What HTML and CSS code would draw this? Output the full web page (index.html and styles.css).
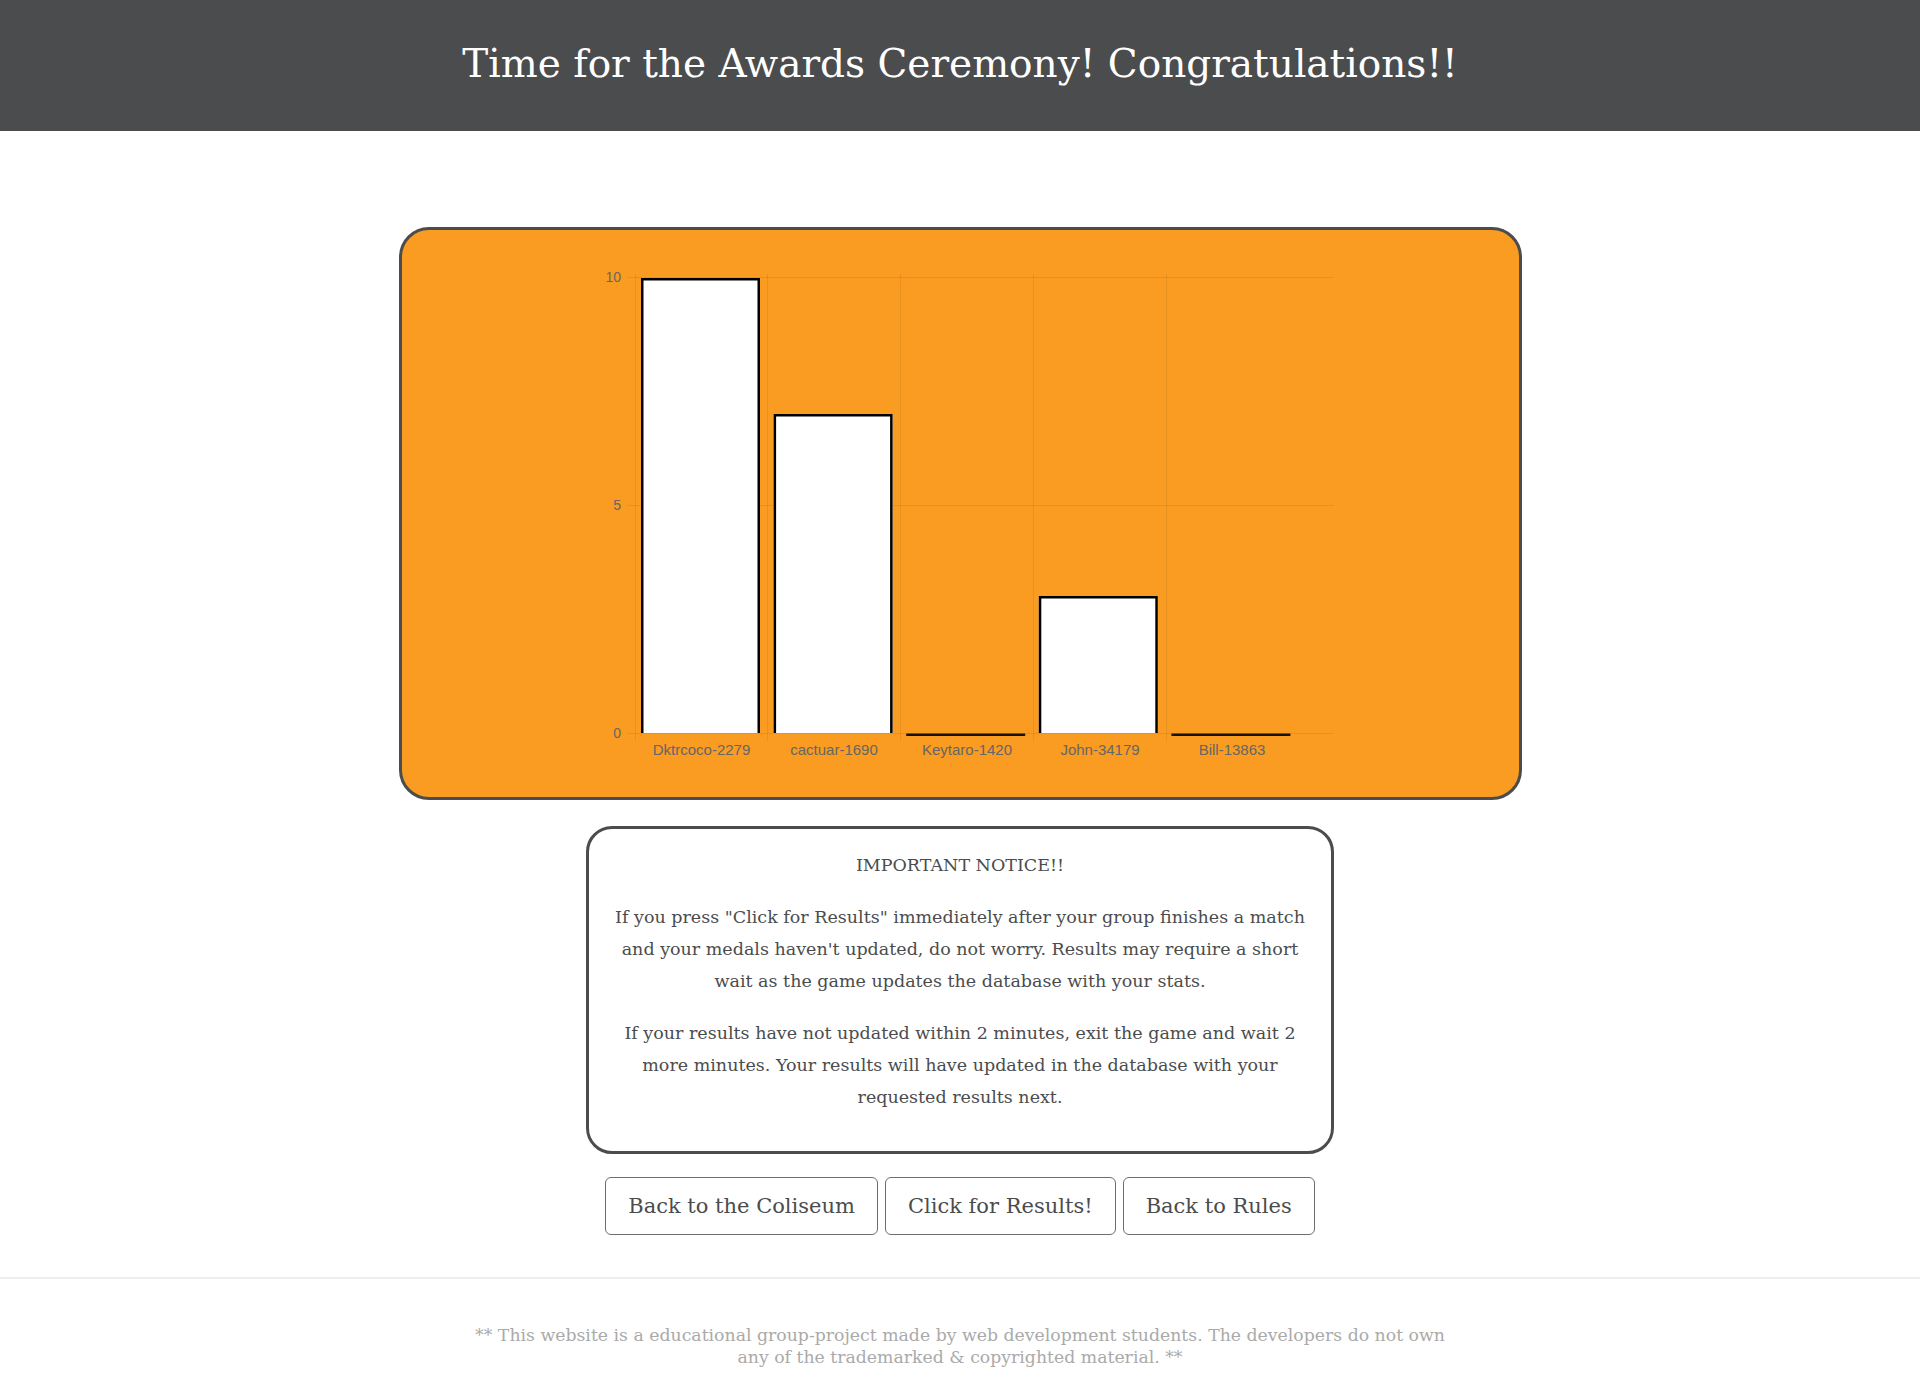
FILE: index.html
```html
<!DOCTYPE html>
<html lang="en">
<head>
<meta charset="utf-8">
<title>Awards Ceremony</title>
<link rel="stylesheet" href="styles.css">
</head>
<body>
<header class="site-header">
  <h1 class="site-title">Time for the Awards Ceremony! Congratulations!!</h1>
</header>
<main class="main">
  <section class="chart-card">
    <svg class="chart" width="750" height="530" viewBox="0 0 750 530">
      <g class="grid">
        <line x1="42" y1="27.5" x2="749" y2="27.5"/>
        <line x1="42" y1="255.5" x2="749" y2="255.5"/>
        <line x1="42" y1="483.5" x2="749" y2="483.5"/>
        <line x1="50.5" y1="24" x2="50.5" y2="491"/>
        <line x1="182.5" y1="24" x2="182.5" y2="491"/>
        <line x1="315.5" y1="24" x2="315.5" y2="491"/>
        <line x1="448.5" y1="24" x2="448.5" y2="491"/>
        <line x1="581.5" y1="24" x2="581.5" y2="491"/>
      </g>
      <g class="bars">
        <rect x="56" y="28" width="119" height="455"/>
        <path d="M57.25 483 V29.25 H173.75 V483"/>
        <rect x="188.6" y="164" width="119" height="319"/>
        <path d="M189.85 483 V165.25 H306.35 V483"/>
        <rect x="453.8" y="346" width="119" height="137"/>
        <path d="M455.05 483 V347.25 H571.55 V483"/>
      </g>
      <g class="zero-bars">
        <rect x="321.2" y="483.5" width="119" height="2.5"/>
        <rect x="586.4" y="483.5" width="119" height="2.5"/>
      </g>
      <g class="ylabels">
        <text x="36" y="32">10</text>
        <text x="36" y="260">5</text>
        <text x="36" y="488">0</text>
      </g>
      <g class="xlabels">
        <text x="116.5" y="505">Dktrcoco-2279</text>
        <text x="249" y="505">cactuar-1690</text>
        <text x="382" y="505">Keytaro-1420</text>
        <text x="515" y="505">John-34179</text>
        <text x="647" y="505">Bill-13863</text>
      </g>
    </svg>
  </section>
  <section class="notice">
    <p class="notice-title">IMPORTANT NOTICE!!</p>
    <p>If you press "Click for Results" immediately after your group finishes a match and your medals haven't updated, do not worry. Results may require a short wait as the game updates the database with your stats.</p>
    <p>If your results have not updated within 2 minutes, exit the game and wait 2 more minutes. Your results will have updated in the database with your requested results next.</p>
  </section>
  <nav class="actions">
    <a class="btn" href="#">Back to the Coliseum</a>
    <a class="btn" href="#">Click for Results!</a>
    <a class="btn" href="#">Back to Rules</a>
  </nav>
</main>
<footer class="site-footer">
  <p class="footer-text">** This website is a educational group-project made by web development students. The developers do not own any of the trademarked &amp; copyrighted material. **</p>
</footer>
</body>
</html>
```

FILE: styles.css
```css
html, body {
  margin: 0;
  padding: 0;
  background: #ffffff;
}

body {
  font-family: "DejaVu Serif", "Liberation Serif", serif;
  color: #4b4c4e;
}

.site-header {
  height: 131px;
  background: #4b4c4e;
  display: flex;
  align-items: center;
  justify-content: center;
}

.site-title {
  margin: 0;
  font-size: 39px;
  font-weight: normal;
  line-height: 1.2;
  color: #ffffff;
  padding-bottom: 2px;
}

.main {
  display: flex;
  flex-direction: column;
  align-items: center;
  padding-top: 96px;
}

.chart-card {
  box-sizing: border-box;
  width: 1123px;
  height: 573px;
  background: #f99c21;
  border: 3px solid #4b4c4e;
  border-radius: 30px;
  display: flex;
  justify-content: center;
  align-items: flex-start;
  padding-top: 20px;
}

.chart {
  display: block;
  overflow: visible;
}

.grid line {
  stroke: rgba(0, 0, 0, 0.07);
  stroke-width: 1;
}

.bars rect {
  fill: #ffffff;
}

.bars path {
  fill: none;
  stroke: #000000;
  stroke-width: 2.5;
}

.zero-bars rect {
  fill: #141414;
}

.ylabels text,
.xlabels text {
  font-family: "Liberation Sans", Arial, sans-serif;
  fill: #666666;
}

.ylabels text {
  font-size: 14px;
  text-anchor: end;
}

.xlabels text {
  font-size: 15px;
  text-anchor: middle;
}

.notice {
  box-sizing: border-box;
  width: 748px;
  margin-top: 26px;
  border: 3px solid #4b4c4e;
  border-radius: 26px;
  padding: 20px 22px 18px;
  text-align: center;
  font-size: 17.5px;
  line-height: 32px;
  color: #4b4c4e;
}

.notice p {
  margin: 0 0 20px;
}

.actions {
  display: flex;
  justify-content: center;
  gap: 7px;
  margin-top: 23px;
}

.btn {
  box-sizing: border-box;
  display: block;
  height: 58px;
  padding: 0 22px;
  border: 1px solid #6c6e72;
  border-radius: 6px;
  font-size: 21px;
  line-height: 56px;
  color: #4b4c4e;
  text-decoration: none;
  background: #ffffff;
}

.site-footer {
  margin-top: 42px;
  border-top: 2px solid #eeeeee;
  padding-top: 45px;
  padding-bottom: 9px;
  display: flex;
  justify-content: center;
}

.footer-text {
  margin: 0;
  max-width: 990px;
  text-align: center;
  font-size: 17.3px;
  line-height: 22px;
  color: #aaaaaa;
}
```
